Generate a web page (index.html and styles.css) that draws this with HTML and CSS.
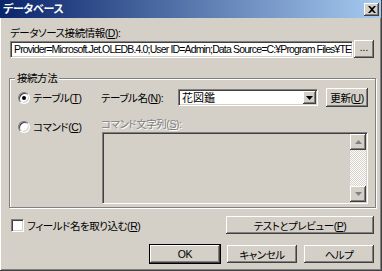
FILE: index.html
```html
<!DOCTYPE html>
<html lang="ja">
<head>
<meta charset="utf-8">
<link rel="stylesheet" href="styles.css">
</head>
<body>
<div class="window">
  <div class="titlebar">
    <span class="title">データベース</span>
    <span class="close"><svg width="8" height="7" viewBox="0 0 8 7"><path d="M0 0h2l2 2 2-2h2L5 3.5 8 7H6L4 5 2 7H0l3-3.5z" fill="#000"/></svg></span>
  </div>
  <div class="content">
    <div class="lbl">データソース接続情報(<u>D</u>):</div>
    <div class="row1">
      <div class="textbox">Provider=Microsoft.Jet.OLEDB.4.0;User ID=Admin;Data Source=C:¥Program Files¥TE</div>
      <div class="btn dots">...</div>
    </div>
    <div class="group">
      <span class="legend">接続方法</span>
      <div class="ggrid">
        <div class="opt"><span class="radio on"></span><span>テーブル(<u>T</u>)</span></div>
        <div class="rowa">
          <span class="tlabel">テーブル名(<u>N</u>):</span>
          <div class="combo"><span class="cval">花図鑑</span><span class="cbtn"><svg width="7" height="4" viewBox="0 0 7 4"><path d="M0 0h7L3.5 4z" fill="#000"/></svg></span></div>
          <div class="btn upd"><span>更新(<u>U</u>)</span></div>
        </div>
        <div class="opt opt2"><span class="radio"></span><span>コマンド(<u>C</u>)</span></div>
        <div class="dis">コマンド文字列(<u>S</u>):</div>
        <div class="memo">
          <div class="sb">
            <span class="sbtn"><svg width="7" height="4" viewBox="0 0 7 4"><path d="M0 4h7L3.5 0z" fill="#808080"/></svg></span>
            <span class="track"></span>
            <span class="sbtn"><svg width="7" height="4" viewBox="0 0 7 4"><path d="M0 0h7L3.5 4z" fill="#808080"/></svg></span>
          </div>
        </div>
      </div>
    </div>
    <div class="row3">
      <div class="chk"><span class="box"></span><span>フィールド名を取り込む(<u>R</u>)</span></div>
      <div class="btn test"><span>テストとプレビュー(<u>P</u>)</span></div>
    </div>
    <div class="row4">
      <div class="btn ok">OK</div>
      <div class="btn">キャンセル</div>
      <div class="btn">ヘルプ</div>
    </div>
  </div>
</div>
</body>
</html>
```

FILE: styles.css
```css
* { box-sizing: border-box; }
html, body { margin: 0; padding: 0; background: #d4d0c8; }
body {
  font-family: "Liberation Sans", "Noto Sans CJK JP", sans-serif;
  font-size: 10.5px;
  letter-spacing: -0.45px;
  color: #000;
  font-feature-settings: "palt";
}
u { text-decoration: underline; text-underline-offset: 1px; }
.window {
  width: 382px;
  height: 271px;
  background: #d4d0c8;
  border-right: 1px solid #404040;
  border-bottom: 1px solid #404040;
  box-shadow: inset -1px -1px 0 #808080;
  overflow: hidden;
}
.titlebar {
  height: 18px;
  background: linear-gradient(to right, #0a246a, #a6caf0);
  display: flex;
  align-items: center;
  justify-content: space-between;
  padding: 0 2px 0 3px;
}
.title {
  color: #fff;
  font-weight: bold;
  font-size: 11px;
  letter-spacing: -0.3px;
  line-height: 18px;
}
.close {
  width: 15px;
  height: 13px;
  background: #d4d0c8;
  display: flex;
  align-items: center;
  justify-content: center;
  box-shadow: inset -1px -1px 0 #404040, inset 1px 1px 0 #fff, inset -2px -2px 0 #808080;
}
.content {
  padding: 8px 7px 0 8px;
  border-left: 1px solid #fff;
  height: 252px;
}
.lbl { line-height: 15px; height: 15px; padding-left: 1px; }
.row1 {
  display: flex;
  align-items: flex-end;
  gap: 1px;
  height: 17px;
}
.textbox {
  flex: 0 0 343px;
  height: 17px;
  background: #fff;
  border-top: 1px solid #808080;
  border-left: 1px solid #808080;
  border-right: 1px solid #fff;
  border-bottom: 1px solid #fff;
  box-shadow: inset 1px 1px 0 #404040, inset -1px -1px 0 #d4d0c8;
  font-size: 10.5px;
  letter-spacing: -0.85px;
  line-height: 15px;
  padding-left: 3px;
  white-space: nowrap;
  overflow: hidden;
  margin-left: 1px;
}
.btn {
  background: #d4d0c8;
  box-shadow: inset -1px -1px 0 #404040, inset 1px 1px 0 #fff, inset -2px -2px 0 #808080;
  display: flex;
  align-items: center;
  justify-content: center;
  white-space: nowrap;
}
.dots { width: 21px; height: 18px; font-size: 10px; line-height: 1; padding-bottom: 2px; letter-spacing: 0; }
.group {
  position: relative;
  margin-top: 20px;
  width: 367px;
  height: 130px;
  border: 1px solid #808080;
  box-shadow: inset 1px 1px 0 #fff, 1px 1px 0 #fff;
  padding: 9px 0 0 8px;
}
.legend {
  position: absolute;
  top: -8px;
  left: 5px;
  padding: 0 2px;
  line-height: 14px;
  background: #d4d0c8;
}
.ggrid {
  display: grid;
  grid-template-columns: 83px 267px;
  grid-template-rows: 19px 13px 72px;
}
.opt { display: flex; align-items: center; gap: 3px; line-height: 14px; }
.opt2 { grid-row: 2 / 3; grid-column: 1; margin-top: 13px; align-self: start; }
.radio {
  width: 12px; height: 12px; border-radius: 50%;
  background: #fff;
  border: 1px solid;
  border-color: #808080 #fff #fff #808080;
  box-shadow: inset 1px 1px 0 #404040, inset -1px -1px 0 #d4d0c8;
  position: relative;
  flex: none;
}
.radio.on::after {
  content: "";
  position: absolute;
  left: 3px; top: 3px;
  width: 4px; height: 4px;
  border-radius: 50%;
  background: #000;
}
.rowa { display: flex; align-items: center; }
.tlabel { width: 77px; flex: none; }
.combo {
  width: 140px; height: 17px;
  background: #fff;
  border-top: 1px solid #808080;
  border-left: 1px solid #808080;
  border-right: 1px solid #fff;
  border-bottom: 1px solid #fff;
  box-shadow: inset 1px 1px 0 #404040, inset -1px -1px 0 #d4d0c8;
  display: flex;
  align-items: center;
  justify-content: space-between;
  padding: 1px 1px 1px 3px;
  flex: none;
}
.cval { line-height: 14px; font-size: 11px; letter-spacing: 0; }
.cbtn {
  width: 13px; height: 13px;
  background: #d4d0c8;
  box-shadow: inset -1px -1px 0 #404040, inset 1px 1px 0 #fff, inset -2px -2px 0 #808080;
  display: flex; align-items: center; justify-content: center;
}
.upd { width: 42px; height: 19px; margin-left: 8px; }
.dis {
  grid-row: 2; grid-column: 2;
  margin-top: 11px;
  color: #808080;
  text-shadow: 1px 1px 0 #fff;
  line-height: 13px;
  height: 13px;
  white-space: nowrap;
  align-self: start;
}
.memo {
  grid-row: 3; grid-column: 2;
  margin-top: 12px;
  margin-left: 1px;
  width: 266px;
  height: 72px;
  border-top: 1px solid #808080;
  border-left: 1px solid #808080;
  border-right: 1px solid #fff;
  border-bottom: 1px solid #fff;
  box-shadow: inset 1px 1px 0 #404040, inset -1px -1px 0 #d4d0c8;
  padding: 1px;
  display: flex;
  justify-content: flex-end;
}
.sb { width: 16px; display: flex; flex-direction: column; }
.sbtn {
  height: 16px;
  background: #d4d0c8;
  box-shadow: inset -1px -1px 0 #404040, inset 1px 1px 0 #fff, inset -2px -2px 0 #808080;
  display: flex; align-items: center; justify-content: center;
}
.track {
  flex: 1;
  background: repeating-conic-gradient(#fff 0 25%, #d4d0c8 0 50%) 0 0 / 2px 2px;
}
.row3 {
  display: flex;
  justify-content: space-between;
  align-items: center;
  margin-top: 8px;
  height: 18px;
  padding-left: 2px;
}
.chk { display: flex; align-items: center; gap: 3px; }
.box {
  width: 13px; height: 13px;
  background: #fff;
  border: 1px solid;
  border-color: #808080 #fff #fff #808080;
  box-shadow: inset 1px 1px 0 #404040, inset -1px -1px 0 #d4d0c8;
}
.test { width: 148px; height: 18px; }
.row4 {
  display: flex;
  justify-content: flex-end;
  gap: 7px;
  margin-top: 11px;
}
.row4 .btn { width: 70px; height: 18px; }
.ok {
  box-shadow: 0 0 0 1px #000, inset -1px -1px 0 #404040, inset 1px 1px 0 #fff, inset -2px -2px 0 #808080 !important;
}
```
